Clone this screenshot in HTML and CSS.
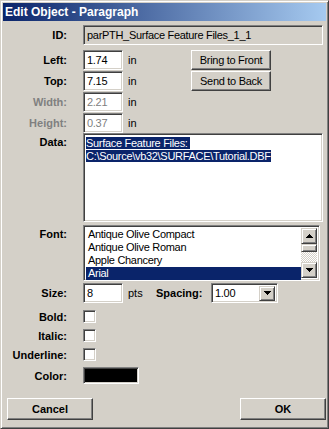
FILE: index.html
```html
<!DOCTYPE html>
<html lang="en">
<head>
    <meta charset="UTF-8">
    <meta name="viewport" content="width=device-width, initial-scale=1.0">
    <title>Edit Object - Paragraph</title>
    <link rel="stylesheet" href="styles.css">
</head>
<body>

    <div class="dialog">
        <div class="titlebar">Edit Object - Paragraph</div>

        <div class="form">
            <div class="row row-id">
                <span class="lbl">ID:</span>
                <div class="sunken id-field">parPTH_Surface Feature Files_1_1</div>
            </div>

            <div class="row row-first">
                <span class="lbl">Left:</span>
                <div class="sunken num">1.74</div>
                <span class="unit">in</span>
                <button class="btn side">Bring to Front</button>
            </div>
            <div class="row">
                <span class="lbl">Top:</span>
                <div class="sunken num">7.15</div>
                <span class="unit">in</span>
                <button class="btn side">Send to Back</button>
            </div>
            <div class="row disabled">
                <span class="lbl">Width:</span>
                <div class="sunken num">2.21</div>
                <span class="unit">in</span>
            </div>
            <div class="row disabled">
                <span class="lbl">Height:</span>
                <div class="sunken num">0.37</div>
                <span class="unit">in</span>
            </div>

            <div class="row row-top row-data">
                <span class="lbl">Data:</span>
                <div class="sunken data-box">
                    <span class="sel">Surface Feature Files:&nbsp;</span><br>
                    <span class="sel">C:\Source\vb32\SURFACE\Tutorial.DBF</span>
                </div>
            </div>

            <div class="row row-top row-font">
                <span class="lbl">Font:</span>
                <div class="sunken font-list">
                    <ul class="items">
                        <li>Antique Olive Compact</li>
                        <li>Antique Olive Roman</li>
                        <li>Apple Chancery</li>
                        <li class="picked">Arial</li>
                    </ul>
                    <div class="scrollbar">
                        <div class="raised arrow">
                            <svg width="7" height="4" viewBox="0 0 7 4"><path d="M3 0h1v1h1v1h1v1h1v1H0V3h1V2h1V1h1z" fill="#000"/></svg>
                        </div>
                        <div class="raised thumb"></div>
                        <div class="track"></div>
                        <div class="raised arrow">
                            <svg width="7" height="4" viewBox="0 0 7 4"><path d="M0 0h7v1H6v1H5v1H4v1H3V3H2V2H1V1H0z" fill="#000"/></svg>
                        </div>
                    </div>
                </div>
            </div>

            <div class="row row-size">
                <span class="lbl">Size:</span>
                <div class="sunken num">8</div>
                <span class="unit unit-pts">pts</span>
                <span class="lbl-inline">Spacing:</span>
                <div class="sunken combo">
                    <span class="combo-text">1.00</span>
                    <div class="raised combo-btn">
                        <svg width="7" height="4" viewBox="0 0 7 4"><path d="M0 0h7v1H6v1H5v1H4v1H3V3H2V2H1V1H0z" fill="#000"/></svg>
                    </div>
                </div>
            </div>

            <div class="row row-check row-bold">
                <span class="lbl">Bold:</span>
                <div class="sunken check"></div>
            </div>
            <div class="row row-check">
                <span class="lbl">Italic:</span>
                <div class="sunken check"></div>
            </div>
            <div class="row row-check">
                <span class="lbl">Underline:</span>
                <div class="sunken check"></div>
            </div>
            <div class="row row-color">
                <span class="lbl">Color:</span>
                <div class="sunken swatch"></div>
            </div>
        </div>

        <div class="actions">
            <button class="btn big">Cancel</button>
            <button class="btn big">OK</button>
        </div>
    </div>

</body>
</html>
```

FILE: styles.css
```css
body {
    margin: 0;
    font-family: "Liberation Sans", Arial, sans-serif;
    font-size: 11px;
    color: #000;
    background-color: #d4d0c8;
}
.dialog {
    width: 329px;
    height: 429px;
    box-sizing: border-box;
    display: flex;
    flex-direction: column;
    padding: 2px;
    background-color: #d4d0c8;
    border: 1px solid;
    border-color: #d4d0c8 #404040 #404040 #d4d0c8;
    box-shadow: inset 1px 1px #fff, inset -1px -1px #808080;
}
.titlebar {
    height: 18px;
    line-height: 18px;
    padding-left: 2px;
    color: #fff;
    font-weight: bold;
    font-size: 12px;
    background: linear-gradient(to right, #0a246a, #a6caf0);
}
.form {
    display: flex;
    flex-direction: column;
}
.row {
    display: flex;
    align-items: center;
    height: 20px;
    margin-top: 1px;
}
.row-top {
    align-items: flex-start;
}
.lbl {
    width: 64px;
    margin-right: 16px;
    text-align: right;
    font-weight: bold;
    flex-shrink: 0;
}
.row-top .lbl {
    padding-top: 3px;
}
.disabled .lbl,
.disabled .num {
    color: #808080;
}
.sunken {
    box-sizing: border-box;
    background-color: #fff;
    border: 1px solid;
    border-color: #808080 #fff #fff #808080;
    box-shadow: inset 1px 1px #404040, inset -1px -1px #d4d0c8;
}
.raised {
    box-sizing: border-box;
    background-color: #d4d0c8;
    border: 1px solid;
    border-color: #d4d0c8 #404040 #404040 #d4d0c8;
    box-shadow: inset 1px 1px #fff, inset -1px -1px #808080;
}
.btn {
    box-sizing: border-box;
    margin: 0;
    padding: 0;
    font-family: "Liberation Sans", Arial, sans-serif;
    font-size: 11px;
    letter-spacing: -0.3px;
    color: #000;
    background-color: #d4d0c8;
    border: 1px solid;
    border-color: #fff #404040 #404040 #fff;
    box-shadow: inset -1px -1px #808080, inset 1px 1px #d4d0c8;
}
.row-id {
    margin-top: 4px;
}
.id-field {
    width: 240px;
    height: 20px;
    line-height: 16px;
    padding: 1px 3px;
    background-color: #d4d0c8;
    letter-spacing: -0.3px;
}
.row-first {
    margin-top: 5px;
}
.num {
    width: 40px;
    height: 20px;
    line-height: 16px;
    padding: 1px 3px;
    letter-spacing: -0.3px;
}
.unit {
    width: 63px;
    padding-left: 5px;
    flex-shrink: 0;
}
.side {
    width: 80px;
    height: 20px;
}
.row-data {
    height: 89px;
    margin-top: 0;
}
.data-box {
    width: 240px;
    height: 89px;
    padding: 3px 2px;
    line-height: 13px;
    color: #fff;
    letter-spacing: -0.3px;
}
.sel {
    background-color: #0a246a;
}
.row-font {
    height: 56px;
    margin-top: 3px;
}
.font-list {
    width: 237px;
    height: 56px;
    padding: 2px;
    display: flex;
}
.items {
    flex: 1;
    margin: 0;
    padding: 0;
    list-style: none;
    line-height: 13px;
    letter-spacing: -0.3px;
}
.items li {
    padding-left: 2px;
}
.items .picked {
    color: #fff;
    background-color: #0a246a;
}
.scrollbar {
    width: 16px;
    display: flex;
    flex-direction: column;
}
.arrow {
    height: 16px;
    display: flex;
    align-items: center;
    justify-content: center;
}
.thumb {
    height: 8px;
}
.track {
    flex: 1;
    background: repeating-conic-gradient(#fff 0 25%, #d4d0c8 0 50%) 0 0 / 2px 2px;
}
.row-size {
    margin-top: 2px;
}
.unit-pts {
    width: 28px;
}
.lbl-inline {
    font-weight: bold;
    width: 55px;
}
.combo {
    width: 67px;
    height: 20px;
    display: flex;
    align-items: center;
    padding: 2px;
}
.combo-text {
    flex: 1;
    padding-left: 1px;
    letter-spacing: -0.3px;
}
.combo-btn {
    width: 16px;
    height: 15px;
    display: flex;
    align-items: center;
    justify-content: center;
}
.row-check {
    height: 13px;
    margin-top: 6px;
}
.row-bold {
    margin-top: 7px;
}
.check {
    width: 13px;
    height: 13px;
}
.row-color {
    height: 17px;
    margin-top: 6px;
}
.swatch {
    width: 56px;
    height: 17px;
    background-color: #000;
}
.actions {
    margin-top: auto;
    display: flex;
    justify-content: space-between;
    padding: 0 0 6px 4px;
}
.big {
    width: 86px;
    height: 22px;
    font-weight: bold;
    letter-spacing: 0;
}
```
